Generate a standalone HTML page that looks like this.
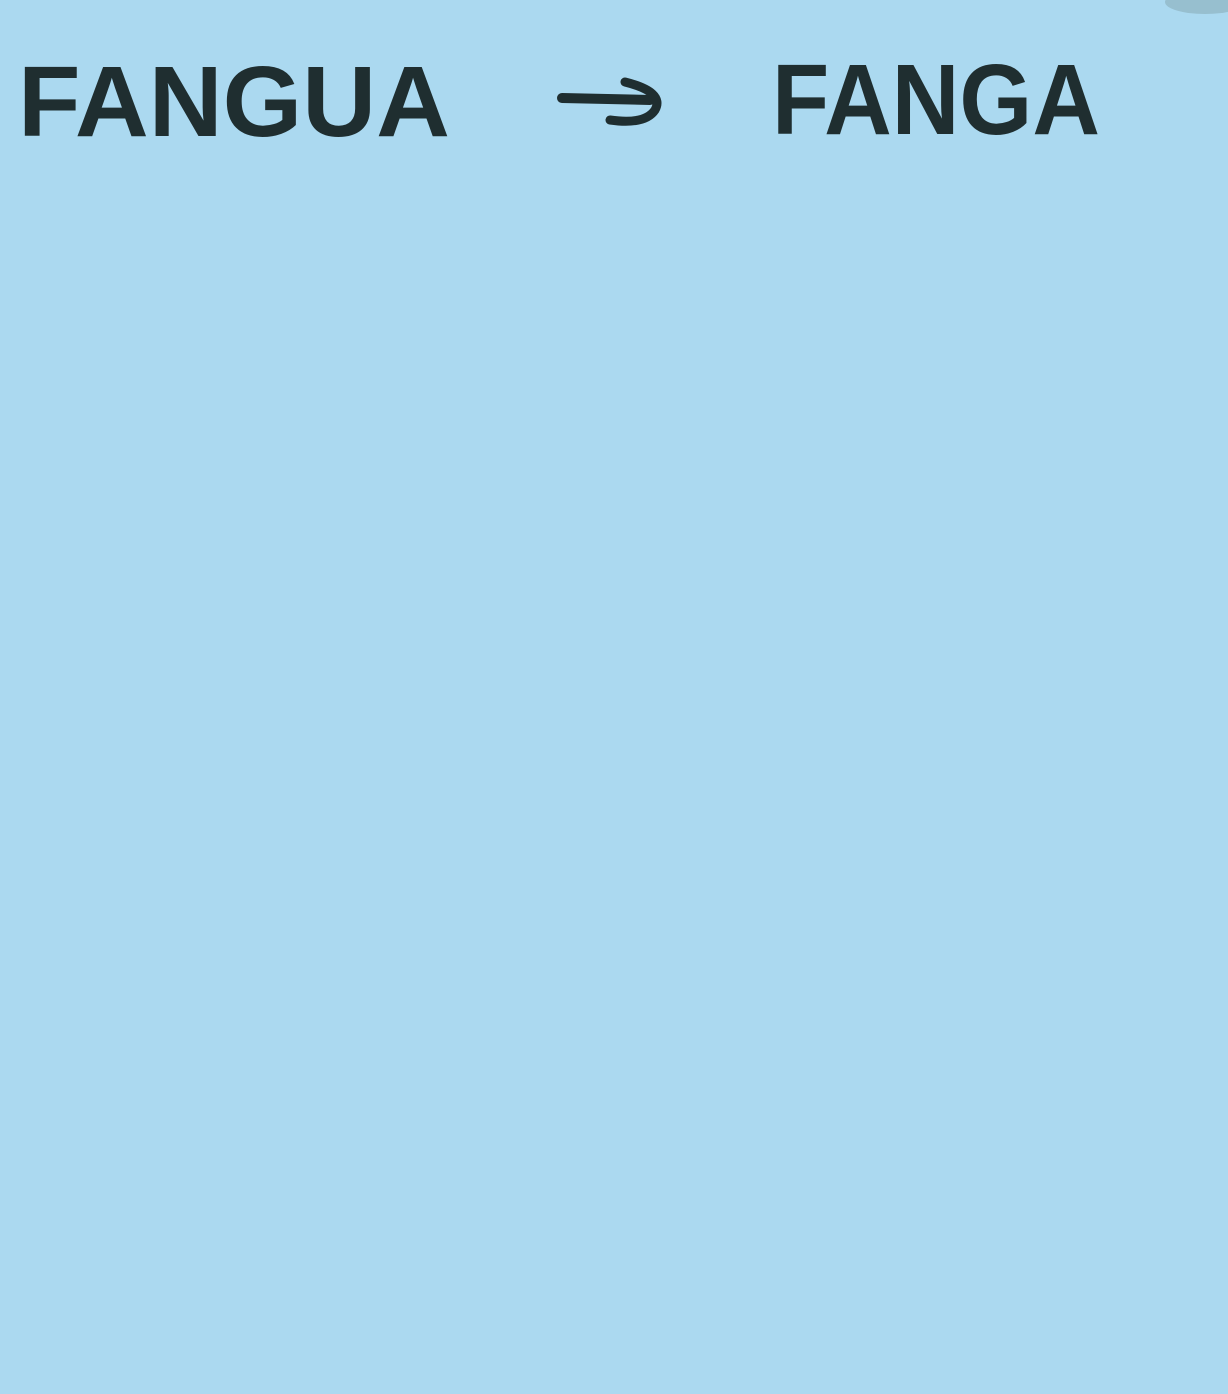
<!DOCTYPE html>
<html><head><meta charset="utf-8"><style>
html,body{margin:0;padding:0;background:#abd9f0;}
svg{display:block}
</style></head><body>
<svg width="1228" height="1394" viewBox="0 0 1228 1394" xmlns="http://www.w3.org/2000/svg">
<rect width="1228" height="1394" fill="#abd9f0"/>
<ellipse cx="1205" cy="2" rx="40" ry="12" fill="#8fb3c0" opacity="0.7"/>
<g font-family="Liberation Sans, sans-serif" font-weight="bold" fill="#1f2e30" font-size="100">
<text x="18" y="136" textLength="432" lengthAdjust="spacingAndGlyphs">FANGUA</text>
<text x="772" y="134" textLength="328" lengthAdjust="spacingAndGlyphs">FANGA</text>
</g>
<path d="M562 98 L650 100" stroke="#1f2e30" stroke-width="10" stroke-linecap="round" fill="none"/>
<path d="M625 82 Q665 92 655 110 Q645 125 610 120" stroke="#1f2e30" stroke-width="9" stroke-linecap="round" fill="none"/>
</svg>
</body></html>
